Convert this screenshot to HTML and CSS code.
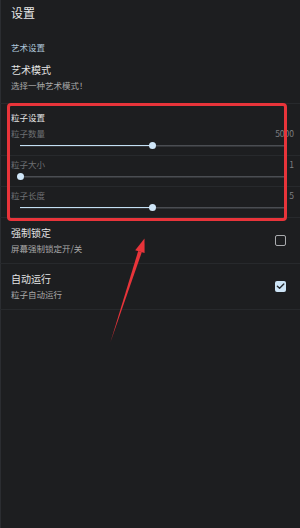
FILE: index.html
```html
<!DOCTYPE html>
<html lang="zh">
<head>
<meta charset="utf-8">
<link rel="stylesheet" href="styles.css">
</head>
<body>
<div class="screen">
  <header class="topbar">设置</header>

  <div class="category">艺术设置</div>
  <div class="pref">
    <div class="pref-title">艺术模式</div>
    <div class="pref-sub">选择一种艺术模式！</div>
  </div>
  <div class="divider"></div>

  <div class="category category-white">粒子设置</div>
  <div class="slider-row">
    <div class="slider-head"><span class="slider-label">粒子数量</span><span class="slider-value">5000</span></div>
    <div class="track"><div class="fill" style="width:50%"></div><div class="thumb" style="left:50%"></div></div>
  </div>
  <div class="divider"></div>
  <div class="slider-row">
    <div class="slider-head"><span class="slider-label">粒子大小</span><span class="slider-value">1</span></div>
    <div class="track"><div class="fill" style="width:0%"></div><div class="thumb" style="left:0%"></div></div>
  </div>
  <div class="divider"></div>
  <div class="slider-row">
    <div class="slider-head"><span class="slider-label">粒子长度</span><span class="slider-value">5</span></div>
    <div class="track"><div class="fill" style="width:50%"></div><div class="thumb" style="left:50%"></div></div>
  </div>
  <div class="divider"></div>

  <div class="check-row">
    <div class="check-text">
      <div class="pref-title">强制锁定</div>
      <div class="pref-sub">屏幕强制锁定开/关</div>
    </div>
    <span class="checkbox"></span>
  </div>
  <div class="divider"></div>
  <div class="check-row">
    <div class="check-text">
      <div class="pref-title">自动运行</div>
      <div class="pref-sub">粒子自动运行</div>
    </div>
    <span class="checkbox checked">
      <svg viewBox="0 0 12 12" width="12" height="12"><path d="M2.6 6.2 L5 8.4 L9.6 3.8" fill="none" stroke="#24292f" stroke-width="1.5" stroke-linecap="round" stroke-linejoin="round"/></svg>
    </span>
  </div>
  <div class="divider"></div>

  <div class="highlight-box"></div>
  <svg class="arrow" viewBox="0 0 300 528" width="300" height="528">
    <polygon points="110.5,342 138.2,251 141.8,252.2" fill="#e8343a"/>
    <polygon points="144.5,238.5 135.2,250.2 144.6,253" fill="#e8343a"/>
  </svg>
</div>
</body>
</html>
```
FILE: styles.css
```css
html, body {
  margin: 0;
  padding: 0;
  background: #1d1e20;
}
.screen {
  position: relative;
  width: 300px;
  height: 528px;
  overflow: hidden;
  background: #1d1e20;
  box-shadow: inset 1px 0 0 #2b2d31;
  font-family: "Noto Sans CJK SC", "Noto Sans", sans-serif;
  color: #e2e2e2;
}
.topbar {
  height: 26px;
  line-height: 26px;
  padding-left: 11px;
  font-size: 12px;
  color: #e8e8e8;
}
.category {
  padding: 15px 0 0 11px;
  font-size: 8.5px;
  line-height: 12px;
  color: #aec6da;
}
.category-white {
  padding-top: 7px;
  padding-bottom: 2px;
  color: #e4e4e4;
}
.pref {
  padding: 10px 11px 11.5px;
}
.pref-title {
  font-size: 10px;
  line-height: 14px;
  color: #e4e4e4;
}
.pref-sub {
  margin-top: 2px;
  font-size: 8.5px;
  line-height: 12px;
  color: #a9a9a9;
}
.divider {
  height: 1px;
  background: #27292c;
}
.slider-row {
  padding: 2.5px 6px 3.5px 11px;
}
.slider-head {
  display: flex;
  justify-content: space-between;
  font-size: 8.5px;
  line-height: 12px;
  color: #6e7073;
}
.slider-value {
  color: #7d7f82;
}
.track {
  position: relative;
  margin: 1px 10px 0 9px;
  height: 11px;
  background: linear-gradient(#4a4d52, #4a4d52) center / 100% 1.5px no-repeat;
}
.fill {
  position: absolute;
  left: 0;
  top: 4.75px;
  height: 1.5px;
  background: #c3dff3;
}
.thumb {
  position: absolute;
  top: 2px;
  width: 7px;
  height: 7px;
  margin-left: -3.5px;
  border-radius: 50%;
  background: #cfe6f8;
}
.check-row {
  display: flex;
  align-items: center;
  justify-content: space-between;
  padding: 8.5px 14px 8.5px 11px;
}
.checkbox {
  width: 11px;
  height: 11px;
  box-sizing: border-box;
  border: 1.5px solid #a9abae;
  border-radius: 2px;
  display: flex;
  align-items: center;
  justify-content: center;
}
.checkbox.checked {
  border: none;
  background: #cde4f6;
}
.highlight-box {
  position: absolute;
  left: 7px;
  top: 103px;
  width: 280px;
  height: 118px;
  box-sizing: border-box;
  border: 3px solid #e8343a;
  border-radius: 4px;
}
.arrow {
  position: absolute;
  left: 0;
  top: 0;
  pointer-events: none;
}
```
